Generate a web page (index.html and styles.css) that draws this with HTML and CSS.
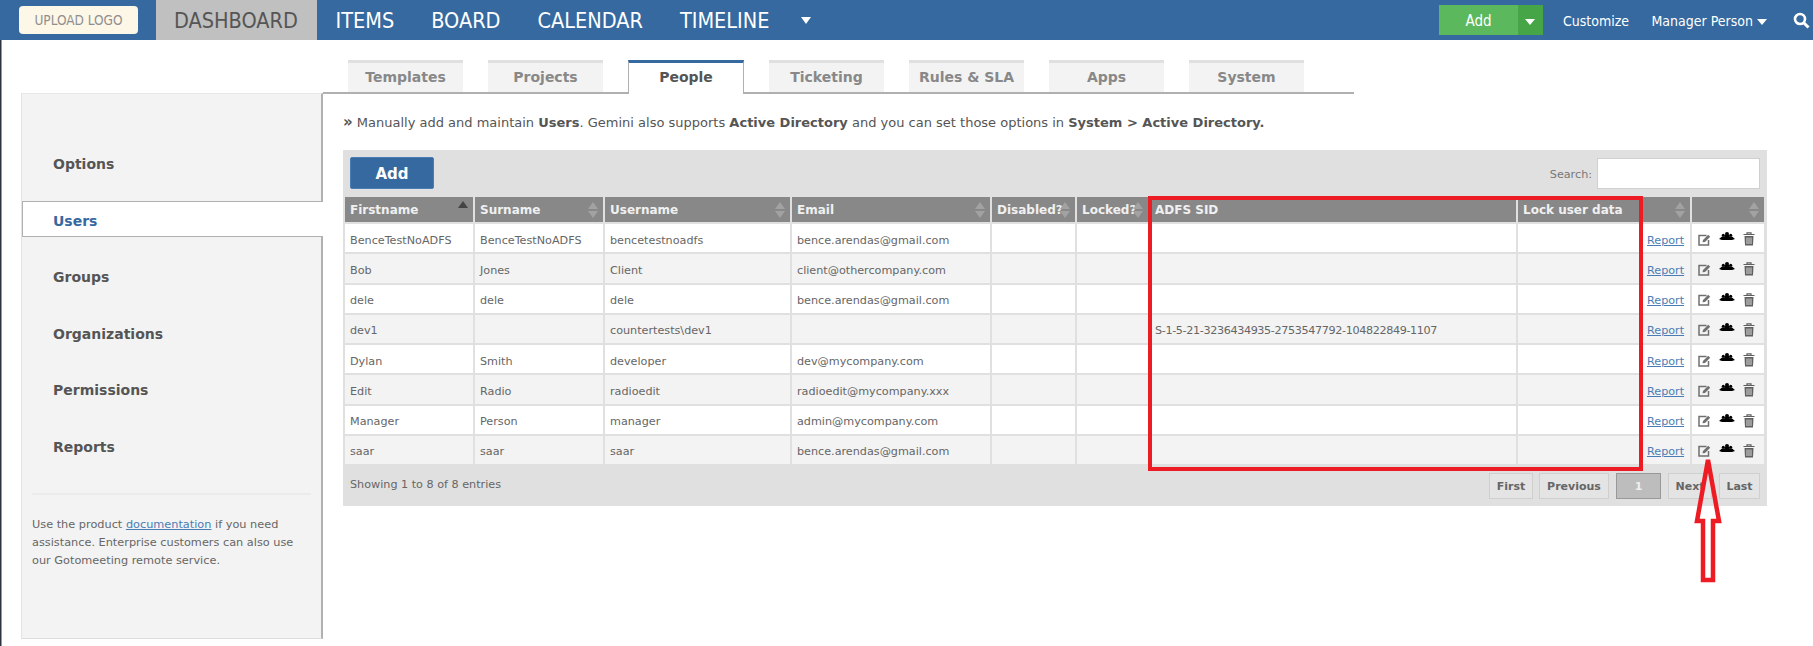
FILE: index.html
```html
<!DOCTYPE html>
<html lang="en">
<head>
    <meta charset="UTF-8">
    <title>Users</title>
    <link rel="stylesheet" href="styles.css">
</head>
<body>
    <header class="topbar">
        <a class="logo">UPLOAD LOGO</a>
        <nav class="mainnav">
            <a class="active">DASHBOARD</a>
            <a>ITEMS</a>
            <a>BOARD</a>
            <a>CALENDAR</a>
            <a>TIMELINE</a>
            <span class="caret caret-main"></span>
        </nav>
        <div class="addgroup">
            <a class="addmain">Add</a>
            <a class="addmore"><span class="caret caret-small"></span></a>
        </div>
        <a class="toplink customize">Customize</a>
        <a class="toplink person">Manager Person <span class="caret caret-small"></span></a>
        <svg class="searchicon" viewBox="0 0 17 17" width="17" height="17">
            <circle cx="7" cy="7" r="5" fill="none" stroke="#fff" stroke-width="2.6"/>
            <path d="M10.5 10.5 L15.5 15.5" stroke="#fff" stroke-width="3"/>
        </svg>
    </header>

    <nav class="tabs">
        <a>Templates</a>
        <a>Projects</a>
        <a class="active">People</a>
        <a>Ticketing</a>
        <a>Rules &amp; SLA</a>
        <a>Apps</a>
        <a>System</a>
    </nav>

    <div class="main">
        <aside class="sidebar">
            <ul class="sidenav">
                <li>Options</li>
                <li class="active">Users</li>
                <li>Groups</li>
                <li>Organizations</li>
                <li>Permissions</li>
                <li>Reports</li>
            </ul>
            <p class="help">Use the product <a href="#">documentation</a> if you need assistance. Enterprise customers can also use our Gotomeeting remote service.</p>
        </aside>

        <section class="content">
            <p class="intro"><b class="quote">»</b> Manually add and maintain <b>Users</b>. Gemini also supports <b>Active Directory</b> and you can set those options in <b>System &gt; Active Directory.</b></p>

            <div class="tablewrap">
                <div class="toolbar">
                    <button class="addbtn">Add</button>
                    <label class="search"><span class="searchlabel">Search:</span> <input type="text"></label>
                </div>

                <table class="grid">
                    <colgroup>
                        <col class="c-first"><col class="c-first"><col class="c-user"><col class="c-email">
                        <col class="c-disabled"><col class="c-locked"><col class="c-sid"><col class="c-lock">
                        <col class="c-report"><col class="c-actions">
                    </colgroup>
                    <thead>
                        <tr>
                            <th class="sorted">Firstname</th>
                            <th class="sort">Surname</th>
                            <th class="sort">Username</th>
                            <th class="sort">Email</th>
                            <th class="sort">Disabled?</th>
                            <th class="sort">Locked?</th>
                            <th>ADFS SID</th>
                            <th class="sort" colspan="2">Lock user data</th>
                            <th class="sort"></th>
                        </tr>
                    </thead>
                    <tbody id="rows"></tbody>
                </table>

                <div class="tablefoot">
                    <span class="showing">Showing 1 to 8 of 8 entries</span>
                    <div class="pager">
                        <a class="p-first">First</a>
                        <a class="p-prev">Previous</a>
                        <a class="p-num">1</a>
                        <a class="p-next">Next</a>
                        <a class="p-last">Last</a>
                    </div>
                </div>
            </div>
        </section>
    </div>

    <!-- red markup drawn on top of the screenshot -->
    <div class="redbox"></div>
    <svg class="redarrow" viewBox="0 0 30 130" width="30" height="130">
        <path d="M15 4 L26 65 L20 65 L20 124 L10 124 L10 65 L4 65 Z" fill="none" stroke="#ed1c24" stroke-width="4.5"/>
    </svg>

    <script>
        var users = [
            ["BenceTestNoADFS", "BenceTestNoADFS", "bencetestnoadfs", "bence.arendas@gmail.com", ""],
            ["Bob", "Jones", "Client", "client@othercompany.com", ""],
            ["dele", "dele", "dele", "bence.arendas@gmail.com", ""],
            ["dev1", "", "countertests\\dev1", "", "S-1-5-21-3236434935-2753547792-104822849-1107"],
            ["Dylan", "Smith", "developer", "dev@mycompany.com", ""],
            ["Edit", "Radio", "radioedit", "radioedit@mycompany.xxx", ""],
            ["Manager", "Person", "manager", "admin@mycompany.com", ""],
            ["saar", "saar", "saar", "bence.arendas@gmail.com", ""]
        ];

        var icons =
            '<svg class="ico ico-edit" viewBox="0 0 13 12" width="13" height="12"><path d="M8.5 1.5 H1 V11 H10.5 V6" fill="none" stroke="#707070" stroke-width="1.5"/><path d="M4.5 8.3 L5 6 L10.2 0.8 L12.2 2.8 L7 8 Z" fill="#707070"/></svg>' +
            '<svg class="ico ico-people" viewBox="0 0 16 8" width="16" height="8"><circle cx="8" cy="2" r="2" fill="#000"/><circle cx="4.3" cy="3.2" r="1.5" fill="#000"/><circle cx="11.7" cy="3.2" r="1.5" fill="#000"/><path d="M0 7 L3 4.6 H5.5 V3 H10.5 V4.6 H13 L16 7 L13 8 H3 Z" fill="#000"/></svg>' +
            '<svg class="ico ico-trash" viewBox="0 0 12 14" width="12" height="14"><path d="M0.5 2.5 H11.5 M4 2.5 V0.8 H8 V2.5" fill="none" stroke="#606060" stroke-width="1.2"/><path d="M1.5 4 H10.5 L10 13.5 H2 Z" fill="#606060"/><path d="M4 5.5 V12 M6 5.5 V12 M8 5.5 V12" stroke="#e8e8e8" stroke-width="0.9"/></svg>';

        var html = "";
        users.forEach(function(u) {
            html += "<tr>";
            html += "<td>" + u[0] + "</td><td>" + u[1] + "</td><td>" + u[2] + "</td><td>" + u[3] + "</td>";
            html += '<td></td><td></td><td class="sid">' + u[4] + "</td><td></td>";
            html += '<td><a class="report" href="#">Report</a></td>';
            html += '<td class="actions">' + icons + "</td>";
            html += "</tr>";
        });
        document.getElementById("rows").innerHTML = html;
    </script>
</body>
</html>
```

FILE: styles.css
```css
html, body {
    margin: 0;
    padding: 0;
}
body {
    font-family: "DejaVu Sans", Verdana, sans-serif;
    font-size: 11.2px;
    color: #666;
    background: #fff;
    min-height: 646px;
    overflow: hidden;
    position: relative;
    box-shadow: inset 1.5px 0 0 #2b3440;
}
a {
    cursor: pointer;
}
.caret {
    display: inline-block;
    width: 0;
    height: 0;
    border-left: 5px solid transparent;
    border-right: 5px solid transparent;
    border-top: 7px solid #fff;
}
.caret-small {
    border-top-width: 6px;
    vertical-align: 1px;
}

/* top bar */
.topbar {
    display: flex;
    align-items: center;
    height: 40px;
    background: #35699f;
    color: #fff;
    font-stretch: condensed;
}
.logo {
    width: 119px;
    height: 28px;
    margin-left: 19px;
    line-height: 28px;
    text-align: center;
    background: #fdf7e8;
    border-radius: 4px;
    color: #8f8f8f;
    font-size: 13.5px;
}
.mainnav {
    display: flex;
    align-items: center;
    height: 40px;
    margin-left: 18px;
    flex: 1;
}
.mainnav a {
    font-size: 21.5px;
    height: 40px;
    line-height: 42px;
    padding: 0 18.5px;
}
.mainnav a.active {
    box-sizing: border-box;
    background: #c0c0c0;
    color: #555;
    width: 161px;
    padding: 0 0 0 18px;
}
.caret-main {
    margin-left: 13px;
}
.addgroup {
    display: flex;
    height: 30px;
    line-height: 32px;
    font-size: 15px;
}
.addmain {
    width: 79px;
    background: #5cb85c;
    text-align: center;
}
.addmore {
    width: 25px;
    background: #46a546;
    text-align: center;
}
.toplink {
    font-size: 14px;
    padding-top: 1px;
}
.customize {
    margin-left: 20px;
}
.person {
    margin-left: 22.4px;
}
.searchicon {
    margin: 0 3px 0 26px;
}

/* section tabs */
.tabs {
    display: flex;
    gap: 25px;
    height: 32px;
    margin: 20px 0 0 323px;
    padding-left: 25px;
    width: 1006px;
    border-bottom: 2px solid #b0b0b0;
}
.tabs a {
    width: 115px;
    height: 29px;
    line-height: 29px;
    text-align: center;
    background: #f3f3f3;
    border-top: 3px solid #e0e0e0;
    color: #888;
    font-size: 14px;
    font-weight: bold;
}
.tabs a.active {
    height: 31px;
    margin: 0 0 -2px;
    width: 114px;
    background: #fff;
    color: #555;
    border-top: 3px solid #35699f;
    border-left: 1px solid #b0b0b0;
    border-right: 1px solid #b0b0b0;
}

.main {
    display: flex;
    align-items: flex-start;
    margin-top: -1px;
}

/* left menu */
.sidebar {
    box-sizing: border-box;
    width: 302px;
    height: 546px;
    margin-left: 21px;
    background: #f3f3f3;
    border-top: 1px solid #e8e8e8;
    border-right: 2px solid #b0b0b0;
    border-bottom: 1px solid #ddd;
    border-left: 1px solid #e4e4e4;
}
.sidenav {
    list-style: none;
    margin: 0;
    padding: 50px 0 0;
    height: 349px;
}
.sidenav li {
    height: 35px;
    line-height: 41px;
    margin-bottom: 21.6px;
    padding-left: 31px;
    color: #555;
    font-size: 14px;
    font-weight: bold;
}
.sidenav li.active {
    box-sizing: border-box;
    height: 36px;
    margin-right: -2px;
    margin-bottom: 20.6px;
    background: #fff;
    color: #35699f;
    border: 1px solid #b0b0b0;
    border-right: none;
    padding-left: 30px;
    line-height: 38px;
}
.help {
    margin: 0 10px;
    padding-top: 21px;
    border-top: 2px solid #ebebeb;
    font-size: 11.3px;
    line-height: 18px;
    color: #666;
}
.help a, .report {
    color: #4a7db5;
    text-decoration: underline;
}

/* content */
.content {
    width: 1424px;
    margin-left: 20px;
}
.intro {
    margin: 0;
    height: 57px;
    line-height: 18px;
    padding-top: 21px;
    box-sizing: border-box;
    font-size: 13px;
    color: #555;
}
.quote {
    font-size: 15px;
    line-height: 16px;
}
.tablewrap {
    background: #e0e0e0;
    height: 356px;
    width: 1424px;
}
.toolbar {
    display: flex;
    justify-content: space-between;
    align-items: center;
    box-sizing: border-box;
    height: 45px;
    padding: 7px 7px 6px;
}
.addbtn {
    width: 84px;
    height: 32px;
    padding: 2px 0 0;
    background: #35699f;
    color: #fff;
    border: 1px solid #4a7db5;
    border-radius: 2px;
    font-family: inherit;
    font-size: 15px;
    font-weight: bold;
}
.search {
    display: flex;
    align-items: center;
    gap: 5px;
    color: #777;
}
.searchlabel {
    padding-top: 2px;
}
.search input {
    box-sizing: border-box;
    width: 163px;
    height: 31px;
    border: 1px solid #d0d0d0;
    background: #fff;
}
.grid {
    table-layout: fixed;
    border-collapse: separate;
    border-spacing: 2px;
    width: 1423px;
}
.c-first { width: 128px; }
.c-user { width: 185px; }
.c-email { width: 198px; }
.c-disabled { width: 83px; }
.c-locked { width: 71px; }
.c-sid { width: 366px; }
.c-lock { width: 122px; }
.c-report { width: 48px; }
.c-actions { width: 72px; }
.grid th {
    position: relative;
    height: 25px;
    padding: 0 0 0 5px;
    background: #888;
    color: #f0f0f0;
    font-size: 12px;
    font-weight: bold;
    text-align: left;
    white-space: nowrap;
}
/* sort arrows */
.grid th.sort::before, .grid th.sort::after, .grid th.sorted::before {
    content: "";
    position: absolute;
    right: 5px;
    width: 0;
    height: 0;
    border-left: 5px solid transparent;
    border-right: 5px solid transparent;
}
.grid th.sort::before {
    top: 5px;
    border-bottom: 7px solid #a2a2a2;
}
.grid th.sort::after {
    top: 14px;
    border-top: 7px solid #a2a2a2;
}
.grid th.sorted::before {
    top: 4px;
    border-bottom: 7px solid #444;
}
.grid td {
    height: 28.25px;
    padding: 4px 0 0 5px;
    box-sizing: border-box;
    background: #fff;
    font-size: 11.2px;
    color: #666;
    white-space: nowrap;
    overflow: hidden;
}
.grid td.sid {
    letter-spacing: -0.37px;
}
.grid tbody tr:nth-child(even) td {
    background: #f3f3f3;
}
.grid td.actions {
    padding: 1px 0 0 6px;
}
.ico {
    vertical-align: middle;
    margin-right: 8px;
}
.ico-edit {
    margin-top: 2px;
}
.ico-people {
    margin-top: -5px;
}
.ico-trash {
    margin-right: 0;
    margin-top: 1px;
}

/* footer of the table */
.tablefoot {
    display: flex;
    justify-content: space-between;
    align-items: center;
    height: 38px;
    padding: 0 7px;
}
.showing {
    margin-top: -2px;
}
.pager {
    display: flex;
    height: 26px;
    margin-top: 2px;
    font-size: 11px;
    font-weight: bold;
    color: #666;
}
.pager a {
    box-sizing: border-box;
    height: 26px;
    line-height: 25px;
    text-align: center;
    border: 1px solid #cfcfcf;
    background: #e4e4e4;
}
.p-first { width: 44px; margin-right: 6px; }
.p-prev { width: 70px; margin-right: 7px; }
.pager a.p-num {
    width: 45px;
    margin-right: 7px;
    background: #bdbdbd;
    border-color: #999;
    color: #eee;
}
.p-next { width: 44px; margin-right: 7px; }
.p-last { width: 41px; }

/* red markup */
.redbox {
    position: absolute;
    left: 1148px;
    top: 196px;
    width: 487px;
    height: 267px;
    border: 4.5px solid #ed1c24;
}
.redarrow {
    position: absolute;
    left: 1693px;
    top: 456px;
}
```
